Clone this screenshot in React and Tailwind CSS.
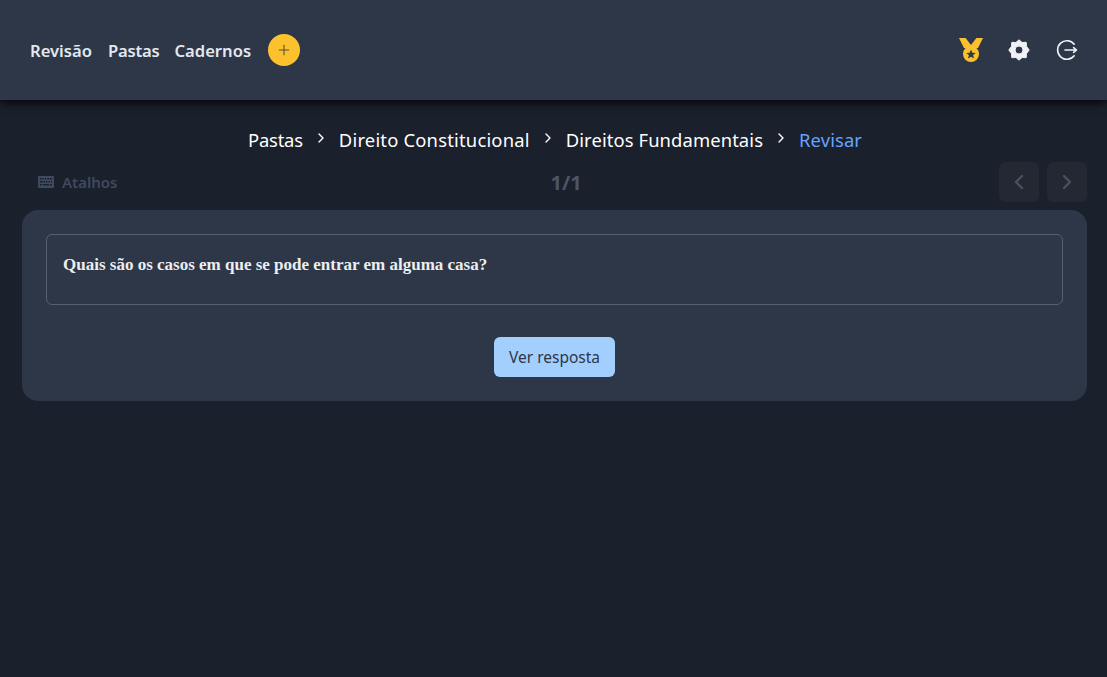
import React from 'react';
import { ChevronLeft, ChevronRight, Plus } from 'lucide-react';

const uiFont = "font-['Noto_Sans',sans-serif]";

const Medal = () => (
  <svg viewBox="0 0 24 24" className="w-6 h-6" fill="#fbc02d">
    <path d="M0 0h6.6l5.4 7 5.4-7h6.6l-5 10h-14Z" />
    <path fillRule="evenodd" d="M12 8a8 8 0 1 1 0 16 8 8 0 0 1 0-16ZM12 11.4 10.7 14.7 7.2 14.9 9.9 17.1 9 20.5 12 18.7 15 20.5 14.1 17.1 16.8 14.9 13.3 14.7Z" />
  </svg>
);

const Gear = () => (
  <svg viewBox="0 0 24 24" className="w-6 h-6" fill="#f1f2f6" stroke="#f1f2f6" strokeWidth="1" strokeLinejoin="round">
    <path fillRule="evenodd" d="M12 1.8l3.1 2.7 4.1-.2.3 4.1 2.7 3.6-2.7 3.6-.3 4.1-4.1-.2-3.1 2.7-3.1-2.7-4.1.2-.3-4.1L1.8 12l2.7-3.6.3-4.1 4.1.2ZM12 8a4 4 0 1 0 0 8 4 4 0 0 0 0-8Z" />
  </svg>
);

const Logout = () => (
  <svg viewBox="0 0 24 24" className="w-6 h-6" fill="none" stroke="#f1f2f6" strokeWidth="1.6" strokeLinecap="round" strokeLinejoin="round">
    <path d="M19.2 6.2A9.3 9.3 0 1 0 19.2 17.8" />
    <path d="M10 12h11.5M18.6 9.6l2.9 2.4-2.9 2.4" />
  </svg>
);

const Keyboard = () => (
  <svg viewBox="0 0 16 12" className="w-4 h-3" fill="#3f4a5e">
    <path fillRule="evenodd" d="M1 0h14a1 1 0 0 1 1 1v10a1 1 0 0 1-1 1H1a1 1 0 0 1-1-1V1a1 1 0 0 1 1-1Zm1 2v1.5h1.5V2Zm2.5 0v1.5H6V2ZM7 2v1.5h1.5V2Zm2.5 0v1.5H11V2ZM12 2v1.5h2V2ZM2 5v1.5h2.5V5Zm3.5 0v1.5H7V5ZM8 5v1.5h1.5V5Zm2.5 0v1.5H12V5ZM13 5v1.5h1V5ZM2 8v1.5h2V8Zm3 0v1.5h6V8Zm7 0v1.5h2V8Z" />
  </svg>
);

const Sep = () => <ChevronRight className="w-4 h-4 text-white mx-[10px] mb-1" strokeWidth={2} />;

export default function App() {
  return (
    <div className={`min-h-screen bg-[#1a202c] ${uiFont}`}>
      <header className="h-[100px] bg-[#2d3748] flex items-center justify-between pl-[30px] pr-[28px] shadow-[0_3px_8px_rgba(0,0,0,0.85)]">
        <nav className="flex items-center gap-[15px] text-[#e2e8f0] font-semibold text-[16.6px]">
          <a className="pt-0.5">Revisão</a>
          <a className="pt-0.5 ml-px tracking-[-0.2px]">Pastas</a>
          <a className="pt-0.5">Cadernos</a>
          <button className="w-8 h-8 ml-[2px] rounded-full bg-[#fcc22e] flex items-center justify-center">
            <Plus className="w-4 h-4 text-[#5a4f2e]" strokeWidth={1.6} />
          </button>
        </nav>
        <div className="flex items-center gap-6">
          <Medal />
          <Gear />
          <Logout />
        </div>
      </header>

      <div className="flex items-center justify-center h-[30px] mt-[25px] pl-[3px] text-[18.4px] tracking-[0.1px] text-white">
        <span className="tracking-[-0.2px]">Pastas</span>
        <Sep />
        <span className="tracking-[0.2px]">Direito Constitucional</span>
        <Sep />
        <span>Direitos Fundamentais</span>
        <Sep />
        <span className="text-[#63a4ff]">Revisar</span>
      </div>

      <div className="pl-[22px] pr-[20px]">
        <div className="flex justify-between items-center h-10 mt-[7px] mb-2">
          <div className="flex items-center gap-2 px-4 text-[15px] font-semibold text-[#3f4a5e]">
            <Keyboard />
            <span>Atalhos</span>
          </div>
          <div className="pt-px text-xl font-bold text-[#4a5568]">1/1</div>
          <div className="flex justify-end gap-2">
            <button className="w-10 h-10 rounded-md bg-[#232833] flex items-center justify-center">
              <ChevronLeft className="w-6 h-6 text-[#4a5060]" strokeWidth={2.4} />
            </button>
            <button className="w-10 h-10 rounded-md bg-[#232833] flex items-center justify-center">
              <ChevronRight className="w-6 h-6 text-[#4a5060]" strokeWidth={2.4} />
            </button>
          </div>
        </div>

        <main className="bg-[#2d3748] rounded-2xl p-6 flex flex-col items-center">
          <div className="w-full h-[71px] border border-[#55606f] rounded-md px-4 pt-[17px] font-['Liberation_Serif',serif] font-bold text-[17px] text-[#eceef0]">
            Quais são os casos em que se pode entrar em alguma casa?
          </div>
          <button className="mt-8 h-10 w-[121px] pt-px rounded-md bg-[#a3cfff] text-[#2d3748] text-[15.5px]">
            Ver resposta
          </button>
        </main>
      </div>
    </div>
  );
}
